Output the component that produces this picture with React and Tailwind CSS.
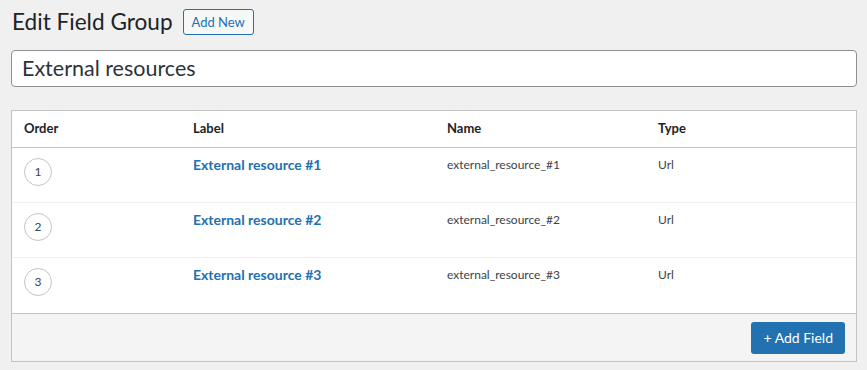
import React from 'react'

const fields = [
  { order: 1, label: 'External resource #1', name: 'external_resource_#1', type: 'Url' },
  { order: 2, label: 'External resource #2', name: 'external_resource_#2', type: 'Url' },
  { order: 3, label: 'External resource #3', name: 'external_resource_#3', type: 'Url' }
]

const cols = 'grid grid-cols-[169px_254px_211px_1fr]'

const App = () => {
  return (
    <div className="min-h-[370px] bg-[#f0f0f1] pl-[11px] pr-[10px] pt-[8px] text-[#3c434a]" style={{ fontFamily: '"Segoe UI", Lato, "Noto Sans", sans-serif' }}>
      {/* Title */}
      <div className="flex items-center h-[28px]">
        <h1 className="text-[22.6px] font-normal text-[#1d2327] leading-[28px] ml-[1px]">Edit Field Group</h1>
        <button className="ml-[10px] h-[26px] px-[8px] border border-[#2271b1] rounded-[3px] bg-[#f6f7f7] text-[#2271b1] text-[13px] leading-[24px]">
          Add New
        </button>
      </div>

      {/* Title input */}
      <div className="mt-[14px] h-[37px] border border-[#8c8f94] rounded-[4px] bg-white flex items-center px-[10px]">
        <span className="text-[21.5px] text-[#2c3338] leading-none">External resources</span>
      </div>

      {/* Fields table */}
      <div className="mt-[23px] border border-[#c3c4c7] bg-white">
        <div className={`${cols} h-[37px] items-center border-b border-[#c3c4c7] text-[13px] font-bold text-[#1d2327]`}>
          <div className="px-3">Order</div>
          <div className="px-3">Label</div>
          <div className="px-3">Name</div>
          <div className="px-3">Type</div>
        </div>

        {fields.map((f, i) => (
          <div
            key={f.order}
            className={`${cols} h-[55px] ${i < fields.length - 1 ? 'border-b border-[#f0f0f1]' : ''}`}
          >
            <div className="px-3 pt-[10px]">
              <div className="w-[28px] h-[28px] rounded-full border border-[#c3c4c7] flex items-center justify-center text-[12px] text-[#3c434a]">
                {f.order}
              </div>
            </div>
            <div className="px-3 pt-[7px] text-[14px] font-bold text-[#2271b1] leading-[20px]">{f.label}</div>
            <div className="px-3 pt-[8px] text-[12px] text-[#3c434a] leading-[18px]">{f.name}</div>
            <div className="px-3 pt-[8px] text-[12px] text-[#3c434a] leading-[18px]">{f.type}</div>
          </div>
        ))}

        <div className="h-[48px] border-t border-[#c3c4c7] bg-[#f4f4f4] flex items-center justify-end pr-[11px]">
          <button className="h-[32px] px-[12px] rounded-[3px] bg-[#2271b1] text-white text-[14px] leading-[30px]">
            + Add Field
          </button>
        </div>
      </div>
    </div>
  )
}

export default App
